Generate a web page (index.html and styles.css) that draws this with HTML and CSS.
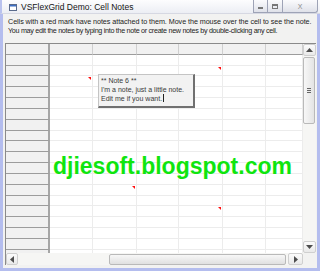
FILE: index.html
```html
<!DOCTYPE html>
<html>
<head>
<meta charset="utf-8">
<link rel="stylesheet" href="styles.css">
</head>
<body>
<div class="window">
  <div class="titlebar">
    <svg class="appicon" width="8" height="7" viewBox="0 0 8 7"><rect x="0.5" y="0.5" width="7" height="6" fill="#fff" stroke="#5a6b8c"/><rect x="1" y="1" width="6" height="1.5" fill="#3d6fc4"/></svg>
    <span class="title">VSFlexGrid Demo: Cell Notes</span>
    <div class="tb-buttons">
      <span class="tb-btn"><span class="g-min"></span></span>
      <span class="tb-btn"><span class="g-max"></span></span>
      <span class="tb-btn close">X</span>
    </div>
  </div>
  <div class="frame">
    <p class="desc"><span class="line1">Cells with a red mark have notes attached to them. Move the mouse over the cell to see the note.</span><br><span class="line2">You may edit the notes by typing into the note or create new notes by double-clicking any cell.</span></p>
    <div class="gridframe">
      <div class="gridrow">
        <div class="grid">
          <div class="c"></div><div class="c"></div><div class="c"></div><div class="c"></div><div class="c"></div><div class="c"></div><div class="c"></div>
          <div class="c"></div><div class="c"></div><div class="c"></div><div class="c"></div><div class="c"></div><div class="c"></div><div class="c"></div>
          <div class="c"></div><div class="c"></div><div class="c"></div><div class="c"></div><div class="c note"></div><div class="c"></div><div class="c"></div>
          <div class="c"></div><div class="c note"></div><div class="c"></div><div class="c"></div><div class="c"></div><div class="c"></div><div class="c"></div>
          <div class="c"></div><div class="c"></div><div class="c"></div><div class="c"></div><div class="c"></div><div class="c"></div><div class="c"></div>
          <div class="c"></div><div class="c"></div><div class="c"></div><div class="c"></div><div class="c"></div><div class="c"></div><div class="c"></div>
          <div class="c"></div><div class="c"></div><div class="c"></div><div class="c"></div><div class="c"></div><div class="c"></div><div class="c"></div>
          <div class="c"></div><div class="c"></div><div class="c"></div><div class="c"></div><div class="c"></div><div class="c"></div><div class="c"></div>
          <div class="c"></div><div class="c"></div><div class="c"></div><div class="c"></div><div class="c"></div><div class="c"></div><div class="c"></div>
          <div class="c"></div><div class="c"></div><div class="c"></div><div class="c"></div><div class="c"></div><div class="c"></div><div class="c"></div>
          <div class="c"></div><div class="c"></div><div class="c"></div><div class="c"></div><div class="c"></div><div class="c"></div><div class="c"></div>
          <div class="c"></div><div class="c"></div><div class="c"></div><div class="c"></div><div class="c"></div><div class="c"></div><div class="c"></div>
          <div class="c"></div><div class="c"></div><div class="c"></div><div class="c"></div><div class="c"></div><div class="c"></div><div class="c"></div>
          <div class="c"></div><div class="c"></div><div class="c note"></div><div class="c"></div><div class="c"></div><div class="c"></div><div class="c"></div>
          <div class="c"></div><div class="c"></div><div class="c"></div><div class="c"></div><div class="c"></div><div class="c"></div><div class="c"></div>
          <div class="c"></div><div class="c"></div><div class="c"></div><div class="c"></div><div class="c note"></div><div class="c"></div><div class="c"></div>
          <div class="c"></div><div class="c"></div><div class="c"></div><div class="c"></div><div class="c"></div><div class="c"></div><div class="c"></div>
          <div class="c"></div><div class="c"></div><div class="c"></div><div class="c"></div><div class="c"></div><div class="c"></div><div class="c"></div>
          <div class="c"></div><div class="c"></div><div class="c"></div><div class="c"></div><div class="c"></div><div class="c"></div><div class="c"></div>
          <div class="c"></div><div class="c"></div><div class="c"></div><div class="c"></div><div class="c"></div><div class="c"></div><div class="c"></div>
        </div>
        <div class="vscroll">
          <div class="sb-btn"><svg width="7" height="4" viewBox="0 0 7 4"><polygon points="3.5,0 7,4 0,4" fill="#4d4d4d"/></svg></div>
          <div class="thumb v"><span class="grip"></span></div>
          <div class="track"></div>
          <div class="sb-btn"><svg width="7" height="4" viewBox="0 0 7 4"><polygon points="0,0 7,0 3.5,4" fill="#4d4d4d"/></svg></div>
        </div>
      </div>
      <div class="hrow">
        <div class="hscroll">
          <div class="sb-btn h"><svg width="4" height="7" viewBox="0 0 4 7"><polygon points="0,3.5 4,0 4,7" fill="#4d4d4d"/></svg></div>
          <div class="track"></div>
          <div class="thumb h"></div>
          <div class="sb-btn h"><svg width="4" height="7" viewBox="0 0 4 7"><polygon points="0,0 4,3.5 0,7" fill="#4d4d4d"/></svg></div>
        </div>
        <div class="corner"></div>
      </div>
      <div class="notebox">** Note 6 **<br>I'm a note, just a little note.<br>Edit me if you want.<span class="caret"></span></div>
      <div class="watermark">djiesoft.blogspot.com</div>
    </div>
  </div>
</div>
</body>
</html>
```
FILE: styles.css
```css
* { box-sizing: border-box; }
html, body { margin: 0; padding: 0; }
body {
  width: 320px; height: 271px; overflow: hidden;
  font-family: "Liberation Sans", Arial, sans-serif;
  background: #fff;
}
.window { width: 320px; height: 271px; display: flex; flex-direction: column; }
.titlebar {
  height: 14px; flex: none;
  display: flex; align-items: center;
  background: linear-gradient(#fdfdfe, #eceef4);
  border-left: 2px solid #b9c2ee;
  border-bottom: 1px solid #d6d8e2;
  padding-left: 7px;
}
.appicon { margin-top: 1px; }
.title { font-size: 8.5px; color: #151515; margin-left: 4px; margin-top: 1px; }
.tb-buttons { margin-left: auto; display: flex; align-self: flex-start; margin-right: 2px; }
.tb-btn {
  height: 13px; width: 15px;
  border: 1px solid #9ea3b6; border-top: none;
  background: linear-gradient(#fbfbfd, #dfe1e9);
  display: flex; align-items: center; justify-content: center;
  color: #777; font-size: 8px;
}
.tb-btn + .tb-btn { border-left: none; }
.tb-btn.close { width: 35px; border-radius: 0 0 3px 0; font-size: 7px; color: #8a8a8a; }
.g-min { width: 5px; height: 2px; background: #777; margin-top: 4px; }
.g-max { width: 6px; height: 5px; border: 1px solid #777; border-top-width: 2px; }
.frame {
  flex: 1;
  display: flex; flex-direction: column;
  background: #f2f2f1;
  border-left: 3px solid #b4bdee;
  border-right: 3px solid #b4bdee;
  border-bottom: 3px solid #b4bdee;
  padding: 0 1px 2px 2px;
}
.desc {
  margin: 4px 0 8px 3px;
  font-size: 7.2px; line-height: 8.5px; color: #222;
  white-space: nowrap;
}
.line1 { letter-spacing: -0.06px; }
.line2 { letter-spacing: -0.3px; }
.gridframe {
  position: relative;
  height: 222px;
  border-top: 1px solid #8a8a8a;
  border-left: 1px solid #8a8a8a;
  display: flex; flex-direction: column;
}
.gridrow { display: flex; height: 209px; }
.grid {
  width: 297px; height: 209px; overflow: hidden;
  display: grid;
  grid-template-columns: 44px 43px 44px 42px 44px 43px 37px;
  grid-auto-rows: 10.84px;
  background: #fff;
}
.c { position: relative; border-right: 1px solid #ececec; border-bottom: 1px solid #ececec; }
.c:nth-child(7n+1) {
  background: #f1f1f1;
  border-bottom: 1px solid #9c9c9c;
  border-right: 2px solid #a6a6a6;
}
.c:nth-child(-n+7) {
  background: #f1f1f1;
  border-bottom: 1px solid #9c9c9c;
  border-right: 1px solid #cfcfcf;
}
.c:first-child { border-right: 2px solid #a6a6a6; }
.note::after {
  content: ""; position: absolute; top: 1px; right: 1px;
  border-top: 3px solid #ff1010; border-left: 3px solid transparent;
}
.vscroll {
  width: 13px; display: flex; flex-direction: column;
  background: #f6f6f4;
}
.sb-btn {
  width: 13px; height: 12px; flex: none;
  border: 1px solid #cfcfcf; border-radius: 2px;
  background: linear-gradient(#fbfbfb, #e9e9e9);
  display: flex; align-items: center; justify-content: center;
}
.track { flex: 1; }
.thumb.v {
  height: 67px; margin-top: 1px; width: 12px;
  border: 1px solid #b9b9b9; border-radius: 2px;
  background: linear-gradient(90deg, #f7f7f7, #e4e4e4);
  display: flex; align-items: center; justify-content: center;
}
.grip {
  width: 4px; height: 5px;
  border-top: 1px solid #666; border-bottom: 1px solid #666;
  position: relative;
}
.grip::after { content: ""; position: absolute; left: 0; right: 0; top: 1px; border-top: 1px solid #666; }
.hrow { display: flex; height: 12px; }
.hscroll { width: 297px; display: flex; background: #f6f6f4; }
.sb-btn.h { width: 12px; height: 12px; }
.hscroll .track { flex: none; width: 91px; }
.thumb.h {
  width: 177px; height: 11px; margin-top: 1px;
  border: 1px solid #b9b9b9; border-radius: 2px;
  background: linear-gradient(#f7f7f7, #e0e0e0);
}
.hscroll .sb-btn.h:last-child { margin-left: auto; width: 15px; }
.corner { width: 13px; background: #f2f2f1; }
.notebox {
  position: absolute; left: 92px; top: 30px;
  width: 97px; height: 34px;
  background: #f2f2f2;
  border-top: 1px solid #c4c4c4; border-left: 1px solid #c4c4c4;
  border-right: 2px solid #707070; border-bottom: 2px solid #707070;
  padding: 2px 0 0 2px;
  font-size: 7px; line-height: 8.5px; color: #3a3a3a; white-space: nowrap;
}
.caret { display: inline-block; width: 1px; height: 8px; background: #222; vertical-align: -1px; margin-left: 1px; }
.watermark {
  position: absolute; left: 47px; top: 111px;
  font-size: 23px; line-height: 23px; font-weight: bold;
  color: #0fe50f; white-space: nowrap;
}
```
